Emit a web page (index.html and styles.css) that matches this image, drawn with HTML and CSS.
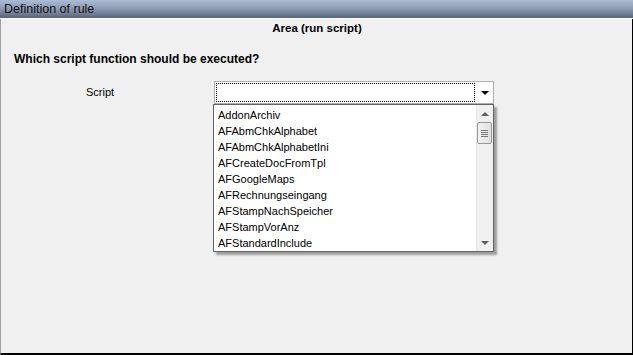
FILE: index.html
```html
<!DOCTYPE html>
<html lang="en">
<head>
<meta charset="UTF-8">
<title>Definition of rule</title>
<link rel="stylesheet" href="styles.css">
</head>
<body>

<div class="window">
  <div class="titlebar">Definition of rule</div>

  <div class="content">
    <div class="area-title">Area (run script)</div>
    <div class="question">Which script function should be executed?</div>

    <div class="field-row">
      <span class="field-label">Script</span>
      <div class="combo">
        <div class="combo-box">
          <div class="combo-focus"></div>
          <span class="combo-arrow"></span>
        </div>

        <div class="combo-list">
          <ul class="list-items">
            <li>AddonArchiv</li>
            <li>AFAbmChkAlphabet</li>
            <li>AFAbmChkAlphabetIni</li>
            <li>AFCreateDocFromTpl</li>
            <li>AFGoogleMaps</li>
            <li>AFRechnungseingang</li>
            <li>AFStampNachSpeicher</li>
            <li>AFStampVorAnz</li>
            <li>AFStandardInclude</li>
          </ul>
          <div class="scrollbar">
            <span class="sb-arrow sb-up"></span>
            <div class="sb-track">
              <div class="sb-thumb">
                <span></span><span></span><span></span><span></span>
              </div>
            </div>
            <span class="sb-arrow sb-down"></span>
          </div>
        </div>
      </div>
    </div>
  </div>
</div>

</body>
</html>
```

FILE: styles.css
```css
*, *::before, *::after { box-sizing: border-box; margin: 0; padding: 0; }
body {
  background: #f0f0f0;
  font-family: 'Liberation Sans', Arial, sans-serif;
  font-size: 11px;
  color: #000;
}
.window {
  width: 633px;
  height: 355px;
  display: flex;
  flex-direction: column;
}
.titlebar {
  height: 19px;
  line-height: 18px;
  padding-left: 4px;
  font-size: 12.5px;
  color: #111;
  background: linear-gradient(180deg, #aebcd2 0%, #8e9db5 45%, #6c7990 80%, #5a6478 100%);
  border-bottom: 1px solid #fff;
  flex-shrink: 0;
}
.content {
  flex: 1;
  border-left: 1px solid #a0a0a0;
  border-right: 1px solid #000;
  border-bottom: 2px solid #000;
  padding-top: 2px;
}
.area-title {
  text-align: center;
  font-weight: bold;
  font-size: 11.5px;
  line-height: 14px;
  padding-left: 1px;
}
.question {
  margin-top: 17px;
  padding-left: 13px;
  font-weight: bold;
  font-size: 12px;
  line-height: 14px;
}
.field-row {
  display: flex;
  margin-top: 15px;
}
.field-label {
  width: 213px;
  padding-left: 85px;
  padding-top: 4px;
  line-height: 14px;
}
.combo { position: relative; }
.combo-box {
  width: 280px;
  height: 23px;
  background: #fff;
  border: 1px solid #abadb3;
  border-top-color: #adb2b5;
  padding: 1px;
  display: flex;
  align-items: center;
}
.combo-focus {
  width: 259px;
  height: 19px;
  border: 1px dotted #000;
}
.combo-arrow {
  margin-left: 6px;
  width: 0; height: 0;
  border-left: 4px solid transparent;
  border-right: 4px solid transparent;
  border-top: 4px solid #000;
  margin-top: 1px;
}
.combo-list {
  position: absolute;
  top: 23px;
  left: -1px;
  width: 281px;
  height: 148px;
  background: #fff;
  border: 1px solid #646464;
  box-shadow: 3px 3px 2px rgba(0, 0, 0, 0.35);
  display: flex;
}
.list-items {
  flex: 1;
  list-style: none;
  padding-top: 2px;
}
.list-items li {
  height: 16px;
  line-height: 16px;
  padding-left: 4px;
  white-space: nowrap;
}
.scrollbar {
  width: 17px;
  background: #f0f0f0;
  border-left: 1px solid #e8e8e8;
  display: flex;
  flex-direction: column;
  align-items: center;
}
.sb-arrow {
  width: 0; height: 0;
  border-left: 4px solid transparent;
  border-right: 4px solid transparent;
  margin: 7px 0 6px;
}
.sb-up { border-bottom: 4px solid #606060; }
.sb-down { border-top: 4px solid #606060; margin: 4px 0 6px; }
.sb-track { flex: 1; width: 100%; }
.sb-thumb {
  width: 15px;
  height: 22px;
  border: 1px solid #979797;
  border-radius: 2px;
  background: linear-gradient(90deg, #f3f3f3, #e0e0e0);
  display: flex;
  flex-direction: column;
  align-items: center;
  justify-content: center;
  gap: 1px;
}
.sb-thumb span {
  width: 7px;
  height: 1px;
  background: #7a7a7a;
}
```
